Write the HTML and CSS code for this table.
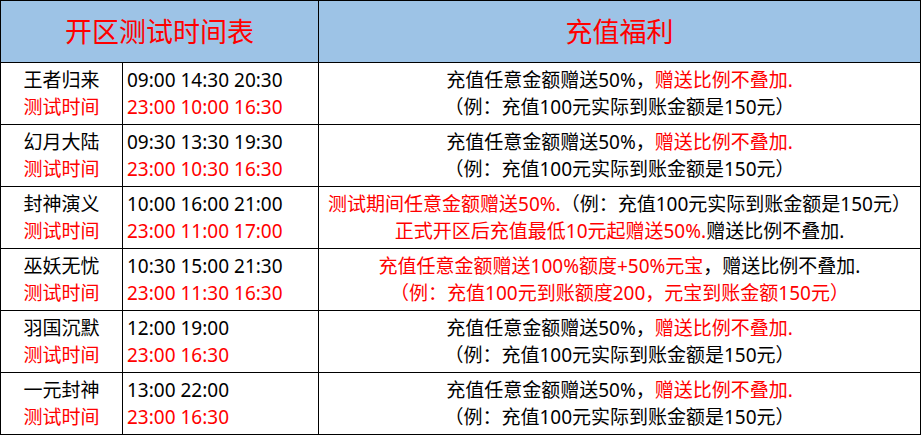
FILE: index.html
```html
<!DOCTYPE html>
<html lang="zh-CN">
<head>
<meta charset="utf-8">
<title>开区测试时间表</title>
<link rel="stylesheet" href="styles.css">
</head>
<body>
<div class="sheet">
  <div class="cell head span2">开区测试时间表</div>
  <div class="cell head">充值福利</div>

  <div class="cell name"><span>王者归来</span><span class="red">测试时间</span></div>
  <div class="cell time"><span>09:00 14:30 20:30</span><span class="red">23:00 10:00 16:30</span></div>
  <div class="cell perk"><span>充值任意金额赠送50%，<em class="red">赠送比例不叠加.</em></span><span>（例：充值100元实际到账金额是150元）</span></div>

  <div class="cell name"><span>幻月大陆</span><span class="red">测试时间</span></div>
  <div class="cell time"><span>09:30 13:30 19:30</span><span class="red">23:00 10:30 16:30</span></div>
  <div class="cell perk"><span>充值任意金额赠送50%，<em class="red">赠送比例不叠加.</em></span><span>（例：充值100元实际到账金额是150元）</span></div>

  <div class="cell name"><span>封神演义</span><span class="red">测试时间</span></div>
  <div class="cell time"><span>10:00 16:00 21:00</span><span class="red">23:00 11:00 17:00</span></div>
  <div class="cell perk"><span><em class="red">测试期间任意金额赠送50%.</em>（例：充值100元实际到账金额是150元）</span><span><em class="red">正式开区后充值最低10元起赠送50%.</em>赠送比例不叠加.</span></div>

  <div class="cell name"><span>巫妖无忧</span><span class="red">测试时间</span></div>
  <div class="cell time"><span>10:30 15:00 21:30</span><span class="red">23:00 11:30 16:30</span></div>
  <div class="cell perk"><span><em class="red">充值任意金额赠送100%额度+50%元宝</em>，赠送比例不叠加.</span><span class="red">（例：充值100元到账额度200，元宝到账金额150元）</span></div>

  <div class="cell name"><span>羽国沉默</span><span class="red">测试时间</span></div>
  <div class="cell time"><span>12:00 19:00</span><span class="red">23:00 16:30</span></div>
  <div class="cell perk"><span>充值任意金额赠送50%，<em class="red">赠送比例不叠加.</em></span><span>（例：充值100元实际到账金额是150元）</span></div>

  <div class="cell name"><span>一元封神</span><span class="red">测试时间</span></div>
  <div class="cell time"><span>13:00 22:00</span><span class="red">23:00 16:30</span></div>
  <div class="cell perk"><span>充值任意金额赠送50%，<em class="red">赠送比例不叠加.</em></span><span>（例：充值100元实际到账金额是150元）</span></div>
</div>
</body>
</html>
```

FILE: styles.css
```css
html, body {
  margin: 0;
  padding: 0;
  background: #ffffff;
}

.sheet {
  width: 921px;
  height: 435px;
  box-sizing: border-box;
  display: grid;
  grid-template-columns: 121px 195px 601px;
  grid-template-rows: repeat(7, 61px);
  gap: 1px;
  padding: 1px;
  background: #000000;
  font-family: "Noto Sans", "Noto Sans CJK SC", sans-serif;
  color: #000000;
}

.cell {
  background: #ffffff;
  display: flex;
  flex-direction: column;
  justify-content: center;
  font-size: 19px;
  line-height: 27px;
  white-space: nowrap;
}

.head {
  background: #9dc3e6;
  color: #ff0000;
  font-size: 27px;
  align-items: center;
  line-height: 34px;
}

.span2 {
  grid-column: span 2;
}

.name {
  align-items: center;
}

.time {
  align-items: flex-start;
  padding-left: 4px;
}

.perk {
  align-items: center;
}

.red {
  color: #ff0000;
}

em {
  font-style: normal;
}
```
